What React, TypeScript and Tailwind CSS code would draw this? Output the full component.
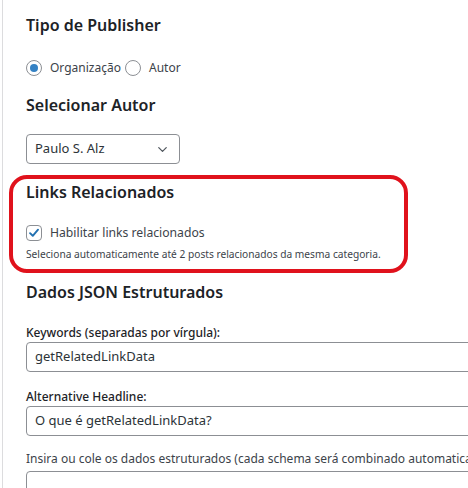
import { ChevronDown } from "lucide-react"

const font = { fontFamily: '"Noto Sans", "Open Sans", sans-serif' }

function Heading({ children, className }: { children: string; className: string }) {
  return (
    <h3 className={`text-[16px] leading-[24px] font-semibold text-[#1d2327] ${className}`}>
      {children}
    </h3>
  )
}

function Radio({ checked, label }: { checked?: boolean; label: string }) {
  return (
    <label className="flex items-center gap-[8px]">
      <span className="flex h-[16px] w-[16px] items-center justify-center rounded-full border border-[#8c8f94] bg-white">
        {checked && <span className="h-[8px] w-[8px] rounded-full bg-[#3582c4]" />}
      </span>
      <span>{label}</span>
    </label>
  )
}

export default function App() {
  return (
    <div
      className="relative h-[488px] w-[468px] overflow-hidden bg-white text-[12px] text-[#3c434a]"
      style={font}
    >
      <div className="ml-[2px] h-full border-l border-[#dcdcde] pl-[23px]">
        <Heading className="pt-[13px]">Tipo de Publisher</Heading>

        <div className="mt-[21px] flex h-[20px] items-center gap-[4px]">
          <Radio checked label="Organização" />
          <Radio label="Autor" />
        </div>

        <Heading className="mt-[15px]">Selecionar Autor</Heading>

        <div className="mt-[17px] flex h-[30px] w-[154px] items-center justify-between rounded-[4px] border border-[#8c8f94] pr-[9px] pl-[8px] text-[13px] text-[#2c3338]">
          <span>Paulo S. Alz</span>
          <ChevronDown size={15} strokeWidth={2} className="text-[#50575e]" />
        </div>

        <Heading className="mt-[16px]">Links Relacionados</Heading>

        <label className="mt-[19px] flex h-[20px] items-center gap-[8px] text-[12.2px]">
          <span className="flex h-[16px] w-[16px] items-center justify-center rounded-[4px] border border-[#8c8f94] bg-white">
            <svg viewBox="0 0 16 16" className="h-[14px] w-[14px]">
              <path d="M3.5 8.2 L6.6 11.2 L12.6 4.2" fill="none" stroke="#2271b1" strokeWidth="2.2" strokeLinecap="round" strokeLinejoin="round" />
            </svg>
          </span>
          <span>Habilitar links relacionados</span>
        </label>
        <p className="mt-[3px] text-[10.2px] leading-[16px] text-[#3c434a]">
          Seleciona automaticamente até 2 posts relacionados da mesma categoria.
        </p>

        <Heading className="mt-[18px]">Dados JSON Estruturados</Heading>

        <p className="mt-[20px] text-[12px] leading-[18px] font-medium text-[#1d2327]">
          Keywords (separadas por vírgula):
        </p>
        <div className="flex h-[30px] w-[460px] items-center rounded-[4px] border border-[#8c8f94] px-[8px] text-[13px] text-[#2c3338]">
          getRelatedLinkData
        </div>

        <p className="mt-[16px] text-[12px] leading-[18px] font-medium text-[#1d2327]">
          Alternative Headline:
        </p>
        <div className="flex h-[30px] w-[460px] items-center rounded-[4px] border border-[#8c8f94] px-[8px] text-[13px] text-[#2c3338]">
          O que é getRelatedLinkData?
        </div>

        <p className="mt-[14px] w-[460px] overflow-hidden text-[12px] leading-[18px] whitespace-nowrap text-[#3c434a]">
          Insira ou cole os dados estruturados (cada schema será combinado automaticamente)
        </p>
        <div className="mt-[3px] h-[60px] w-[460px] rounded-[4px] border border-[#8c8f94]" />
      </div>

      <div className="pointer-events-none absolute top-[175px] left-[9px] h-[98px] w-[399px] rounded-[18px] border-[4px] border-[#e0121c]" />
    </div>
  )
}
